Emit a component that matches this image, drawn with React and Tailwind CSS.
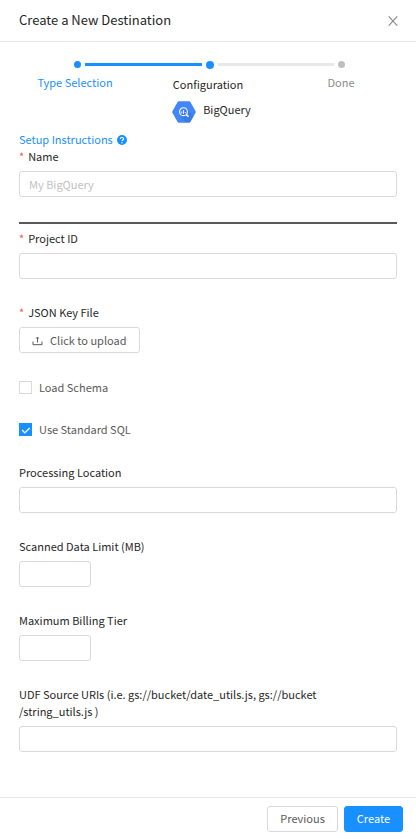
const field =
  "block h-[26px] rounded-[3px] border border-[#d9d9d9] bg-white px-[9px] text-[#595959] outline-none placeholder:text-[#bfbfbf] focus:border-[#1890ff]";

function Label({ id, required, children }) {
  return (
    <label htmlFor={id} className="block pb-[6px] leading-[17px] text-[#262626]">
      {required && <span className="mr-1 text-[#ff4d4f]">*</span>}
      {children}
    </label>
  );
}

function TextField({ id, label, required, placeholder, short }) {
  return (
    <div>
      <Label id={id} required={required}>{label}</Label>
      <input id={id} type="text" placeholder={placeholder} className={`${field} ${short ? "w-[72px]" : "w-full"}`} />
    </div>
  );
}

function Check({ id, label, defaultChecked }) {
  return (
    <label htmlFor={id} className="flex items-center gap-[7px] leading-[17px] text-[#595959]">
      <span className="grid size-[13px] shrink-0">
        <input
          id={id}
          type="checkbox"
          defaultChecked={defaultChecked}
          className="peer col-start-1 row-start-1 size-[13px] appearance-none border border-[#d9d9d9] bg-white checked:border-[#1890ff] checked:bg-[#1890ff]"
        />
        <svg viewBox="0 0 13 13" className="pointer-events-none invisible col-start-1 row-start-1 size-[13px] peer-checked:visible" fill="none" stroke="#fff" strokeWidth="1.3">
          <path d="M3.2 7 L5.8 9.9 L10.7 5" />
        </svg>
      </span>
      {label}
    </label>
  );
}

function BigQueryLogo() {
  return (
    <svg viewBox="0 0 24 22" className="mt-px h-[22px] w-6" aria-hidden="true">
      <path d="M6.8 .3h10.400a1.400 1.400 0 0 1 1.200.700l5.200 9.200a1.500 1.500 0 0 1 0 1.500l-5.200 9.200a1.400 1.400 0 0 1-1.200.800H6.800a1.400 1.400 0 0 1-1.200-.800L.400 11.700a1.500 1.500 0 0 1 0-1.500L5.600 1a1.400 1.400 0 0 1 1.200-.700z" fill="#4386fa" />
      <path d="M15 7.500l6.600 7.600-3.200 5.800a1.400 1.400 0 0 1-1.200.8h-3.500L8.700 14z" fill="#000" opacity=".08" />
      <circle cx="11.500" cy="10.700" r="3.900" fill="none" stroke="#fff" strokeWidth="1.100" />
      <path d="M14.400 13.600l2.100 2.100" stroke="#fff" strokeWidth="1.500" />
      <path d="M9.700 10.500v1.700M11.500 9v4M13.300 11v1.200" stroke="#fff" strokeWidth=".9" />
    </svg>
  );
}

export default function App() {
  return (
    <div className="flex min-h-screen flex-col bg-white font-['Noto_Sans_CJK_SC',sans-serif] text-[11px] leading-[17px]">
      <header className="flex h-[42px] items-center justify-between border-b border-[#e8e8e8] px-[19px]">
        <h1 className="pb-0.5 text-[13px] text-[#262626]">Create a New Destination</h1>
        <button type="button" aria-label="Close" className="-mr-px pt-px">
          <svg viewBox="0 0 10 10" className="size-[10px]" fill="none" stroke="#8c8c8c" strokeWidth="1.1">
            <path d="M.7.300l8.600 9.400M9.300.300L.700 9.700" />
          </svg>
        </button>
      </header>

      <main className="flex flex-1 flex-col px-[19px]">
        <div className="flex flex-col items-center pt-[18px]">
          <ol className="grid w-full max-w-[396px] grid-cols-[112px_1fr_112px]">
            <li className="flex flex-col items-center text-[#1890ff]">
              <span className="ml-1 flex h-[9px] items-center"><span className="size-[7px] rounded-full bg-[#1890ff]" /></span>
              <span className="pt-[5px]">Type Selection</span>
            </li>
            <li className="flex flex-col items-center text-[#262626]">
              <span className="-mr-[49px] -ml-[46px] flex h-[9px] items-center gap-1 self-stretch">
                <span className="h-[3px] flex-1 bg-[#1890ff]" />
                <span className="size-2 rounded-full bg-[#1890ff]" />
                <span className="h-[3px] flex-1 bg-[#e8e8e8]" />
              </span>
              <span className="pt-[7px]">Configuration</span>
            </li>
            <li className="flex flex-col items-center text-[#8c8c8c]">
              <span className="flex h-[9px] items-center"><span className="size-[7px] rounded-full bg-[#bfbfbf]" /></span>
              <span className="pt-[5px]">Done</span>
            </li>
          </ol>
        </div>

        <div className="flex items-start justify-center gap-[7px] pt-[7px] pl-[7px]">
          <BigQueryLogo />
          <h2 className="pt-px text-[#262626]">BigQuery</h2>
        </div>

        <form className="flex flex-col pt-2">
          <a href="#setup" className="flex items-center gap-1 self-start text-[#1890ff]">
            Setup Instructions
            <svg viewBox="0 0 10 10" className="size-[10px]" aria-hidden="true">
              <circle cx="5" cy="5" r="5" fill="#1890ff" />
              <path d="M3.400 3.900C3.400 2 6.600 2 6.600 3.900C6.600 5 5 4.900 5 6.100" fill="none" stroke="#fff" strokeWidth="1.200" />
              <circle cx="5" cy="7.700" r=".7" fill="#fff" />
            </svg>
          </a>
          <TextField id="name" label="Name" required placeholder="My BigQuery" />
          <hr className="mt-[25px] mb-[6px] border-t-2 border-[#595959]" />
          <TextField id="project" label="Project ID" required />
          <div className="pt-[25px]">
            <Label id="upload" required>JSON Key File</Label>
            <button id="upload" type="button" className="flex h-[26px] items-center gap-[7px] rounded-[3px] border border-[#d9d9d9] px-3 text-[#595959]">
              <svg viewBox="0 0 11 11" className="size-[11px]" fill="none" stroke="#595959" aria-hidden="true">
                <path d="M1 6.500v3.200h9v-3.200M5.500 7.500V2.500M4.300 3.500L5.500 2L6.700 3.500" />
              </svg>
              Click to upload
            </button>
          </div>
          <div className="flex flex-col gap-[25px] py-[26px]">
            <Check id="schema" label="Load Schema" />
            <Check id="sql" label="Use Standard SQL" defaultChecked />
          </div>
          <div className="flex flex-col gap-[25px]">
            <TextField id="location" label="Processing Location" />
            <TextField id="limit" label="Scanned Data Limit (MB)" short />
            <TextField id="tier" label="Maximum Billing Tier" short />
            <TextField id="udf" label={<>UDF Source URIs (i.e. gs://bucket/date_utils.js, gs://bucket<br />/string_utils.js )</>} />
          </div>
        </form>
      </main>

      <footer className="flex h-[42px] items-center justify-end gap-[6px] border-t border-[#e8e8e8] px-[13px]">
        <button type="button" className="h-[26px] rounded-[3px] border border-[#d9d9d9] px-3 text-[#595959]">Previous</button>
        <button type="button" className="h-[26px] rounded-[3px] border border-[#1890ff] bg-[#1890ff] px-3 text-white">Create</button>
      </footer>
    </div>
  );
}
